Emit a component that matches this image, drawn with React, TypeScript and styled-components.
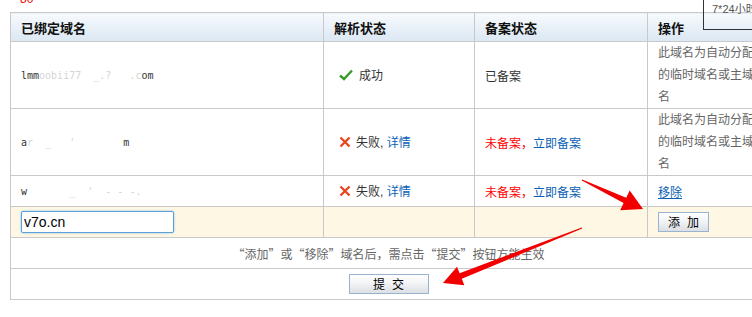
import styled, { createGlobalStyle } from 'styled-components'

const GlobalStyle = createGlobalStyle`
  html, body {
    margin: 0;
    padding: 0;
    overflow: hidden;
    background: #fff;
  }
  body {
    font-family: "Liberation Sans", "Noto Sans CJK SC", sans-serif;
    font-size: 12px;
    color: #333;
  }
`

const arrow = (x1: number, y1: number, x2: number, y2: number, headLen: number, headW: number, shaftW: number) => {
  const dx = x2 - x1
  const dy = y2 - y1
  const len = Math.hypot(dx, dy)
  const ux = dx / len
  const uy = dy / len
  const nx = -uy
  const ny = ux
  const bx = x2 - ux * headLen
  const by = y2 - uy * headLen
  const pts = [
    [x1 + nx * 0.5, y1 + ny * 0.5],
    [bx + nx * shaftW, by + ny * shaftW],
    [bx + nx * headW, by + ny * headW],
    [x2, y2],
    [bx - nx * headW, by - ny * headW],
    [bx - nx * shaftW, by - ny * shaftW],
    [x1 - nx * 0.5, y1 - ny * 0.5],
  ]
  return pts.map(p => p.map(v => v.toFixed(1)).join(',')).join(' ')
}

export default function App() {
  return (
    <>
      <GlobalStyle />
      <Page>
        <Note><span>80</span></Note>
        <Table>
          <colgroup>
            <col style={{ width: 313 }} />
            <col style={{ width: 151 }} />
            <col style={{ width: 173 }} />
            <col style={{ width: 119 }} />
          </colgroup>
          <thead>
            <tr>
              <Th>已绑定域名</Th>
              <Th>解析状态</Th>
              <Th>备案状态</Th>
              <Th>操作</Th>
            </tr>
          </thead>
          <tbody>
            <tr>
              <Td $h={66}>
                <Domain>lmm<Faint>oobii77</Faint>  <Faint>_.?</Faint>   <Faint>.c</Faint>om</Domain>
              </Td>
              <Td $h={66}>
                <Status><Check viewBox="0 0 14 12"><path d="M1 6.5 L5 10 L13 1.5" /></Check>成功</Status>
              </Td>
              <Td $h={66}>已备案</Td>
              <Td $h={66}><Hint>此域名为自动分配的临时域名或主域名</Hint></Td>
            </tr>
            <tr>
              <Td $h={66}>
                <Domain>a<Faint>r  _   '</Faint>        m</Domain>
              </Td>
              <Td $h={66}>
                <Status><Cross viewBox="0 0 12 12"><path d="M1.5 1.5 L10.5 10.5 M10.5 1.5 L1.5 10.5" /></Cross>失败,&nbsp;<Link>详情</Link></Status>
              </Td>
              <Td $h={66}><Red>未备案，</Red><Link>立即备案</Link></Td>
              <Td $h={66}><Hint>此域名为自动分配的临时域名或主域名</Hint></Td>
            </tr>
            <tr>
              <Td $h={30}>
                <Domain>w<Faint>       _  '  - - -.</Faint></Domain>
              </Td>
              <Td $h={30}>
                <Status><Cross viewBox="0 0 12 12"><path d="M1.5 1.5 L10.5 10.5 M10.5 1.5 L1.5 10.5" /></Cross>失败,&nbsp;<Link>详情</Link></Status>
              </Td>
              <Td $h={30}><Red>未备案，</Red><Link>立即备案</Link></Td>
              <Td $h={30}><Link $underline>移除</Link></Td>
            </tr>
            <AddRow>
              <Td $h={30}><Input defaultValue="v7o.cn" /></Td>
              <Td $h={30} />
              <Td $h={30} />
              <Td $h={30}><Button $w={51}>添加</Button></Td>
            </AddRow>
            <tr>
              <Message colSpan={4} $h={30}>“添加”或“移除”域名后，需点击“提交”按钮方能生效</Message>
            </tr>
            <tr>
              <Message colSpan={4} $h={30}><Button $w={80}>提交</Button></Message>
            </tr>
          </tbody>
        </Table>
        <Tip>7*24小时客服</Tip>
        <Arrows width="752" height="317" viewBox="0 0 752 317">
          <polygon points={arrow(582, 180, 643, 209, 20, 11, 3)} />
          <polygon points={arrow(582, 228, 443, 283, 19, 10, 3)} />
        </Arrows>
      </Page>
    </>
  )
}

const Page = styled.div`
  position: relative;
  width: 752px;
  height: 317px;
  padding-left: 10px;
  box-sizing: border-box;
`

const Note = styled.div`
  height: 12px;
  overflow: hidden;
  padding-left: 10px;
  color: #e00;
  font-size: 12px;
  line-height: 12px;

  span {
    display: block;
    margin-top: -7px;
  }
`

const Table = styled.table`
  width: 756px;
  table-layout: fixed;
  border-collapse: collapse;
  border: 1px solid #c9c9c9;
`

const Th = styled.th`
  height: 28px;
  padding: 0 10px;
  text-align: left;
  font-size: 13px;
  font-weight: bold;
  color: #111;
  border: 1px solid #c9c9c9;
  background: linear-gradient(#f7fafd, #dbe7f3);
`

const Td = styled.td<{ $h: number }>`
  height: ${p => p.$h}px;
  padding: 0 10px;
  border: 1px solid #c9c9c9;
  vertical-align: middle;
  white-space: nowrap;
  overflow: hidden;
  color: #333;
`

const Message = styled(Td)`
  text-align: center;
  color: #666;
  font-family: "Noto Sans CJK SC", sans-serif;
  font-feature-settings: "fwid";
`

const AddRow = styled.tr`
  background: #fdf7e3;
`

const Domain = styled.span`
  font-family: "DejaVu Sans Mono", monospace;
  font-size: 10px;
  color: #333;
  white-space: pre;
`

const Faint = styled.span`
  color: #d4d4d4;
`

const Status = styled.span`
  display: inline-flex;
  align-items: center;
  padding-left: 5px;
`

const Check = styled.svg`
  width: 14px;
  height: 12px;
  margin-right: 6px;
  fill: none;
  stroke: #3c9a2a;
  stroke-width: 2.4;
`

const Cross = styled.svg`
  width: 12px;
  height: 12px;
  margin-right: 5px;
  fill: none;
  stroke: #e8471e;
  stroke-width: 2.4;
`

const Link = styled.a<{ $underline?: boolean }>`
  color: #0b5fb5;
  text-decoration: ${p => (p.$underline ? 'underline' : 'none')};
  cursor: pointer;
`

const Red = styled.span`
  color: #f00;
`

const Hint = styled.div`
  white-space: normal;
  line-height: 22px;
  color: #666;
`

const Input = styled.input`
  width: 153px;
  height: 22px;
  box-sizing: border-box;
  padding: 0 2px;
  border: 1px solid #5d9fd9;
  border-radius: 2px;
  box-shadow: 0 0 2px #7ab6ea;
  font-family: "Liberation Sans", sans-serif;
  font-size: 14px;
  color: #000;
  outline: none;
  background: #fff;
`

const Button = styled.button<{ $w: number }>`
  width: ${p => p.$w}px;
  height: 20px;
  padding: 0 0 0 7px;
  border: 1px solid #98b2cf;
  background: linear-gradient(#ffffff, #f2f4f6 45%, #dcdfe3);
  font-family: "Noto Sans CJK SC", sans-serif;
  font-size: 12px;
  line-height: 18px;
  letter-spacing: 7px;
  color: #000;
  vertical-align: middle;
`

const Tip = styled.div`
  position: absolute;
  left: 703px;
  top: -4px;
  width: 80px;
  height: 34px;
  border: 1px solid #333;
  padding: 7px 0 0 8px;
  box-sizing: border-box;
  font-size: 11px;
  line-height: 11px;
  color: #555;
  white-space: nowrap;
  overflow: hidden;
`

const Arrows = styled.svg`
  position: absolute;
  left: 0;
  top: 0;
  pointer-events: none;
  fill: #f20000;
`
